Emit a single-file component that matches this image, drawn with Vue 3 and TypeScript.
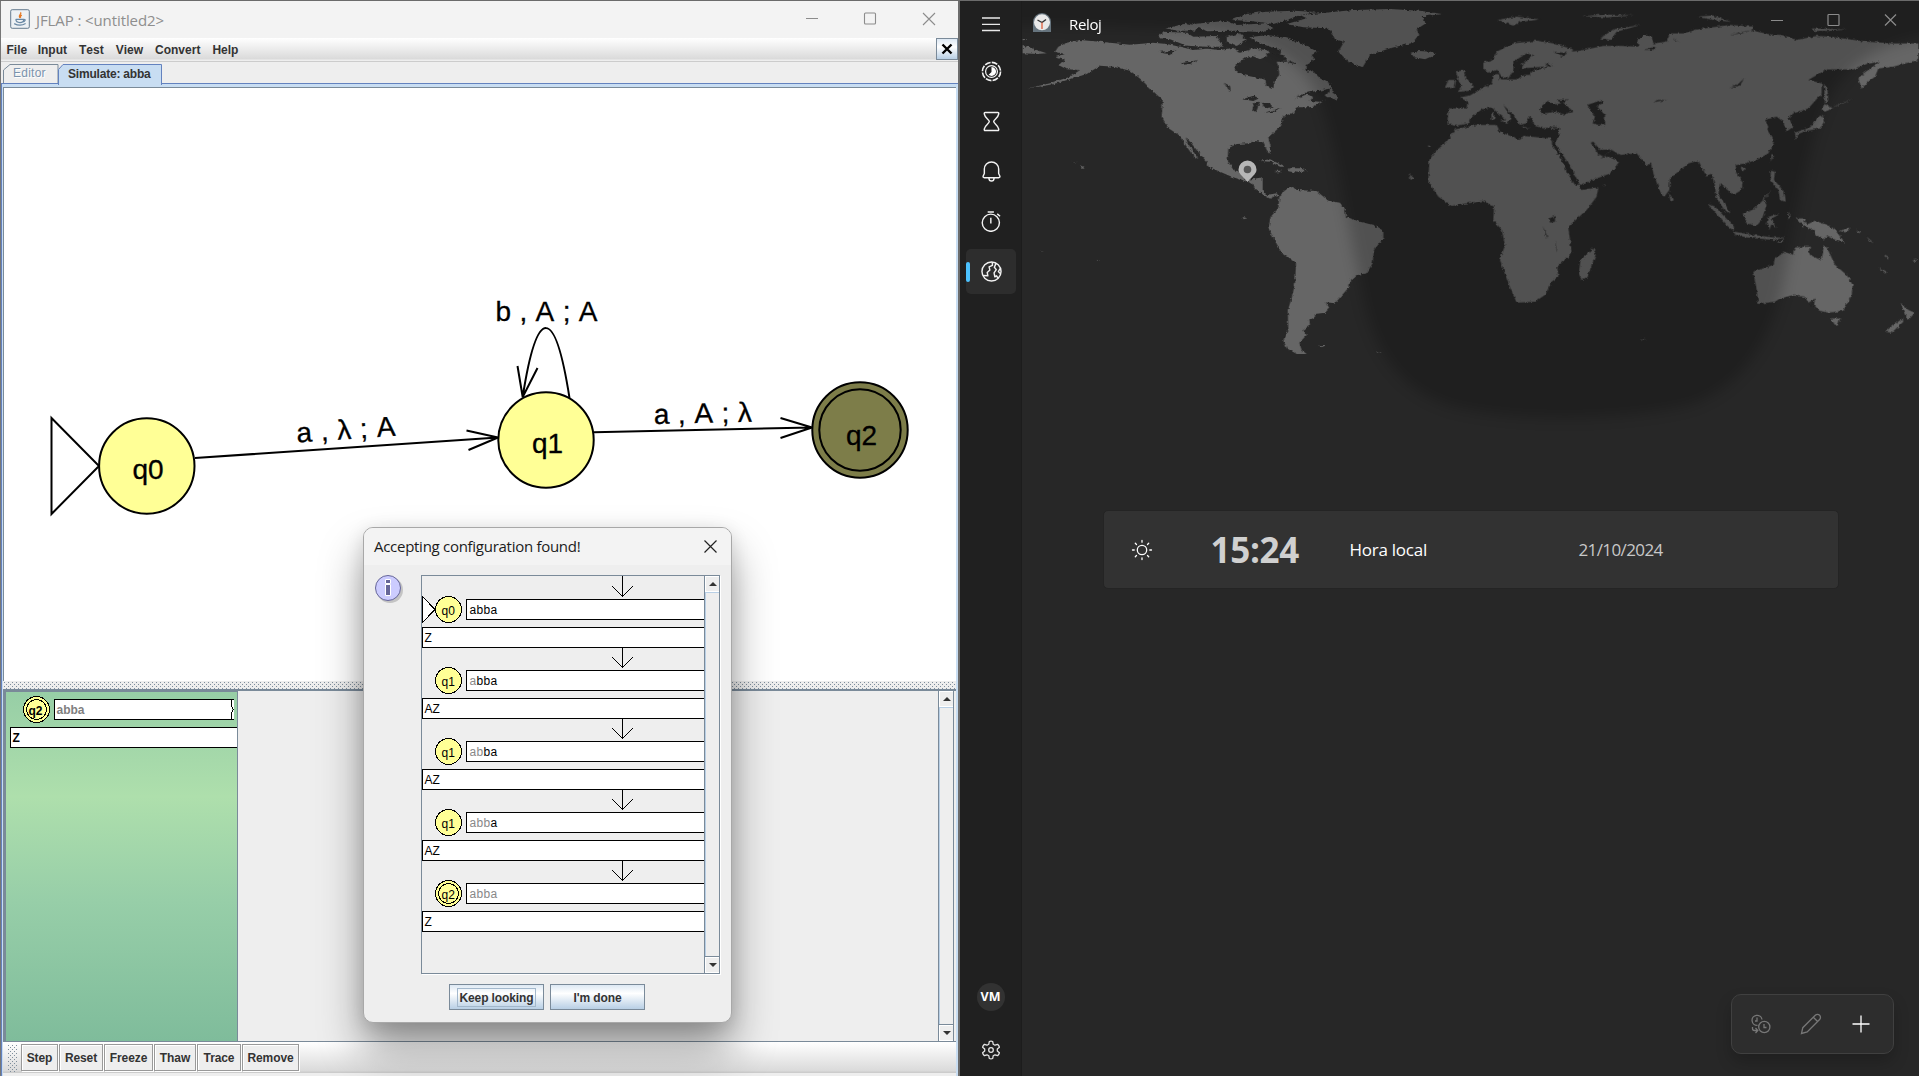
<script setup lang="ts">
interface Step {
  state: string
  read: string
  rest: string
  stack: string
  initial?: boolean
  final?: boolean
}

const menus: string[] = ['File', 'Input', 'Test', 'View', 'Convert', 'Help']
const steps: Step[] = [
  { state: 'q0', read: '', rest: 'abba', stack: 'Z', initial: true },
  { state: 'q1', read: 'a', rest: 'bba', stack: 'AZ' },
  { state: 'q1', read: 'ab', rest: 'ba', stack: 'AZ' },
  { state: 'q1', read: 'abb', rest: 'a', stack: 'AZ' },
  { state: 'q2', read: 'abba', rest: '', stack: 'Z', final: true },
]
const actions = [
  { label: 'Step', width: 37 },
  { label: 'Reset', width: 44 },
  { label: 'Freeze', width: 49 },
  { label: 'Thaw', width: 42 },
  { label: 'Trace', width: 44 },
  { label: 'Remove', width: 57 },
]

// Land outlines, western hemisphere
const west: string = [
  'M115 140 140 128 180 120 240 125 330 134 400 128 440 132 480 140 520 150 560 146 600 150 640 143 660 158 690 150 705 165 670 178 648 195 645 210 670 225 735 238 740 258 760 265 765 240 778 225 775 200 770 185 800 185 840 197 860 215 875 210 900 235 935 255 935 265 880 275 850 280 825 298 860 283 880 290 870 303 900 305 918 298 880 320 865 322 830 322 822 338 790 348 783 378 745 412 752 440 752 462 740 450 730 425 700 423 690 430 650 432 625 445 623 480 640 510 660 515 680 540 728 532 728 570 740 585 770 580 778 592 765 588 750 596 715 575 695 550 635 530 600 515 565 500 560 485 530 450 510 425 497 412 503 430 535 478 520 468 500 440 480 407 445 385 425 350 428 300 395 270 365 240 330 212 280 200 240 197 200 222 150 238 90 255 25 265 90 250 150 230 180 210 140 208 115 195 135 180 105 172 135 162 105 155Z',
  'M778 592 790 572 818 560 830 570 890 573 925 602 960 608 975 630 978 650 1020 665 1060 675 1090 692 1090 715 1062 750 1058 790 1040 820 1010 825 990 842 988 860 945 910 918 907 928 925 915 938 885 942 885 955 868 958 870 975 850 990 860 1005 838 1028 845 1050 860 1062 830 1062 800 1045 790 1020 805 990 803 930 815 895 825 850 828 790 785 760 745 685 752 650 775 625Z',
  'M800 72 860 55 840 45 900 40 1000 30 1110 27 1200 32 1265 42 1205 50 1218 70 1190 88 1198 105 1180 128 1110 145 1050 165 1028 202 985 185 955 155 972 125 945 118 935 98 920 85 850 82Z',
  'M688 112 740 105 800 115 845 130 892 155 875 165 885 178 868 190 850 212 825 190 780 165 785 150 750 140 720 130Z',
  'M415 108 430 95 500 98 520 110 590 108 610 140 560 140 500 137 450 118 420 115Z',
  'M440 85 500 70 540 78 520 92 470 92Z M520 72 620 62 650 75 740 70 760 85 720 96 640 92 560 94Z M635 60 680 42 740 35 820 32 890 36 840 45 800 60 760 72 700 64Z M620 110 660 100 680 120 650 138 622 128Z M690 145 740 150 750 165 720 178 690 165Z M790 170 830 182 805 186Z',
  'M8 135 50 150 80 160 50 162 8 160Z M8 117 28 118 8 121Z M920 280 935 262 938 278 958 292 950 302 935 292 918 292Z',
  'M720 482 750 478 795 500 780 500 750 485Z M808 505 840 505 860 512 830 518 805 514Z M768 512 782 512 782 517 768 517Z M895 1035 920 1035 905 1042Z M1070 1052 1085 1058 1072 1058Z M182 495 195 502 190 508Z M160 485 170 489 160 487Z M668 651 683 655 670 658Z M232 779 240 782 232 782Z M64 750 70 755 64 754Z',
  'M1172 158 1195 153 1235 155 1250 163 1215 178 1182 172Z M1225 435 1233 441 1225 441Z M1166 520 1182 535 1172 540Z',
].join(' ')

const westWater: string =
  'M668 298 700 287 718 295 700 303Z M697 330 703 307 720 305 708 337Z M725 308 750 310 758 322 740 325 730 318Z M733 338 785 322 760 335Z M612 248 630 258 632 275 620 262Z M483 190 535 180 510 192 490 194Z M420 155 470 152 450 163 430 160Z M735 160 790 165 800 180 760 180Z M820 292 880 275 930 270 915 290 880 290 860 282Z'

// Land outlines, eastern hemisphere
const east: string = [
  'M85 325 140 325 142 305 120 292 150 286 185 265 215 252 218 225 236 222 240 238 290 238 330 215 400 198 335 203 310 205 305 195 340 165 320 160 280 185 280 210 265 235 245 230 232 210 205 218 190 205 190 188 220 178 230 155 280 130 350 122 400 130 460 148 450 160 400 155 425 170 450 155 480 152 550 138 605 138 655 140 652 122 672 103 695 110 700 130 740 125 750 100 790 100 830 88 930 75 1000 80 998 92 1050 103 1085 105 1130 120 1190 108 1230 110 1340 125 1420 130 1495 130 1495 180 1420 200 1375 205 1365 230 1345 245 1325 266 1315 235 1330 220 1380 185 1340 192 1300 208 1220 208 1165 240 1205 250 1205 280 1165 325 1120 340 1105 355 1120 380 1100 394 1090 365 1070 350 1035 360 1045 380 1042 390 1062 425 1045 460 1010 480 975 490 945 497 945 512 968 545 965 570 940 585 900 550 895 585 920 620 932 640 915 633 890 595 885 560 875 520 860 530 835 482 805 490 750 535 748 570 733 590 720 575 700 520 693 490 680 497 650 460 600 465 575 450 550 470 540 475 565 470 598 485 570 520 480 555 470 540 430 470 405 430 415 410 418 383 400 380 370 385 345 378 330 348 318 370 300 375 280 345 250 315 262 335 275 355 265 365 240 345 215 322 185 328 150 355 145 370 105 378 82 370Z',
  'M80 425 105 388 170 375 230 375 240 395 300 420 310 408 390 415 405 440 430 480 470 540 485 570 535 562 530 590 500 630 445 680 455 760 412 800 415 830 395 845 375 885 345 905 290 908 265 850 240 780 255 735 245 690 220 660 222 620 190 603 130 612 95 618 55 590 25 545 28 480 45 455Z',
  'M482 780 520 745 527 765 500 835 485 840 476 820Z M747 580 762 600 752 606Z M540 115 580 88 662 75 590 95 572 120Z M232 60 290 50 360 58 300 66 280 77Z M485 48 560 44 640 46 560 52Z M832 50 880 46 930 65 880 60Z M1175 85 1280 88 1230 93 1180 93Z',
  'M75 262 85 240 105 240 102 262 85 266Z M108 215 130 210 140 235 162 260 150 272 112 276 125 262 115 240Z',
  'M212 250 240 238 240 246Z M214 340 222 335 224 358 215 360Z M240 362 268 360 262 372Z M305 380 330 384 310 386Z M392 385 408 382 398 390Z',
  'M1210 250 1222 265 1225 300 1215 310 1213 270Z M1213 312 1238 325 1215 335 1205 330Z M1208 345 1212 365 1200 385 1160 392 1128 405 1125 398 1170 382 1195 350Z M1125 400 1135 410 1128 418Z M1055 462 1062 465 1052 485Z M962 502 976 505 968 514Z',
  'M1052 512 1065 515 1062 540 1080 560 1090 575 1095 605 1080 600 1075 570 1052 540Z M1028 598 1058 565 1030 602Z M968 640 1000 628 1030 600 1040 615 1025 660 1010 678 980 670Z M862 610 885 620 942 680 940 692 915 672Z M942 695 1000 705 1060 712 1100 712 1060 720 980 712 945 704Z M1045 650 1080 642 1055 655 1070 685 1055 670 1048 690 1040 670Z M1070 728 1095 715 1085 728Z M1105 632 1112 650 1105 658Z',
  'M1130 655 1155 655 1150 668 1165 672 1185 662 1220 675 1245 690 1275 728 1250 722 1225 708 1210 718 1185 705 1180 690 1150 678Z M1258 693 1292 682 1280 697Z M1310 690 1325 700 1312 697Z M1340 710 1362 730 1348 722Z M1375 802 1400 817 1395 820Z M1398 762 1406 780 1398 772Z M1475 783 1490 778 1488 786Z',
  'M1000 815 1060 795 1065 775 1095 755 1118 765 1125 742 1170 740 1165 762 1205 782 1212 735 1222 745 1245 795 1280 825 1298 855 1295 885 1270 932 1225 938 1198 932 1182 915 1185 895 1165 908 1155 890 1115 886 1080 895 1065 905 1015 912 1010 870Z M1232 955 1260 955 1255 972 1245 975Z',
  'M1442 908 1465 930 1485 938 1465 960 1455 945Z M1448 955 1450 965 1415 998 1395 995 1430 968Z M665 1015 680 1020 665 1020Z M1238 322 1300 295 1260 315Z M548 555 560 557 550 558Z',
].join(' ')

const eastWater: string =
  'M360 330 365 318 385 302 400 315 430 308 460 335 430 343 405 335 365 342Z M410 300 445 298 425 310Z M502 315 545 300 548 310 530 318 555 345 555 375 535 375 518 370 525 350Z M512 428 520 425 540 450 575 448 550 470 535 462Z M388 655 405 648 405 665 390 668Z M368 678 384 715 376 705Z M406 722 412 755 408 745Z M928 264 955 252 972 235 960 256Z M700 308 712 300 742 300 712 304Z M928 105 1000 90 965 100Z M300 208 335 203 330 225 305 225Z M375 190 398 195 385 201Z M393 428 402 428 430 468 455 505 478 552 466 556 440 515 425 480Z M672 150 705 140 700 150Z M760 115 778 128 762 120Z M1172 918 1180 908 1182 918Z'
</script>

<template>
  <main class="desktop">
    <section class="jflap">
      <header class="titlebar">
        <svg class="java" width="20" height="20" viewBox="0 0 20 20">
          <rect x=".7" y=".7" width="18.6" height="18.6" rx="1.5" fill="#edf1f4" stroke="#657b8e" />
          <path d="M10.500 3.200c1.800 1.800-2.700 2.800-.8 5.600M11.800 6.200c-1.600.8-1.800 1.600-1 2.600" fill="none" stroke="#e67924" stroke-width="1.300" />
          <path d="M5.800 10.300h8c0 4.400-7.600 4.400-8 0M13.800 10.300c2.600-.2 1 2.600-.9 2.600M4.200 14.600c3.500 1.900 8.100 1.900 11.400 0" fill="none" stroke="#6988a4" stroke-width="1.200" />
        </svg>
        <span class="caption">JFLAP : &lt;untitled2&gt;</span>
        <svg class="controls" width="132" height="16" viewBox="0 0 132 16" fill="none" stroke="#8c8c8c" stroke-width="1.1">
          <path d="M1 7.500h12M118 2l12 12M130 2l-12 12" /><rect x="59.500" y="2" width="11" height="11" rx="1" />
        </svg>
      </header>
      <nav class="menubar">
        <span v-for="item in menus" :key="item">{{ item }}</span>
        <button class="close-tab"><svg width="12" height="12" viewBox="0 0 12 12"><path d="M1.500 1.500l9 9M10.500 1.500l-9 9" stroke="#000" stroke-width="2.400" /></svg></button>
      </nav>
      <div class="tabs">
        <svg width="162" height="23" viewBox="0 0 162 23" class="tabshape">
          <path d="M2.500 21V8L9 2.500H57V21" fill="#eee" stroke="#7a8a99" />
          <path d="M57.500 23V7.500L62 2.500H160.500V23" fill="#c8ddf2" stroke="#6382bf" />
        </svg>
        <span class="tab-off">Editor</span><span class="tab-on">Simulate: abba</span>
      </div>
      <div class="page">
        <div class="canvas">
          <svg width="951" height="593" viewBox="4 88 951 593" fill="none" stroke="#000" stroke-width="2">
            <path d="M51.500 418 99 466 51.500 514Z" />
            <path d="M195 458 498 437.500 466.500 430.500M498 437.500 468.500 450" />
            <path d="M594 432.300 812 427.500 780.500 418M812 427.500 780.500 438" />
            <path d="M569.500 398C555 305 537 305 522.700 397L517.500 366M522.700 397 537.500 368" />
            <circle cx="146.800" cy="466" r="47.700" fill="#ffff96" />
            <circle cx="546" cy="440" r="47.700" fill="#ffff96" />
            <circle cx="860" cy="430" r="47.700" fill="#7d7d49" />
            <circle cx="860" cy="430" r="40.700" />
            <g class="diagram-text">
              <text x="132.500" y="479">q0</text><text x="532" y="453">q1</text><text x="846" y="445">q2</text>
              <text x="495.500" y="320.500" textLength="102">b , A ; A</text>
              <text transform="translate(297 442.500) rotate(-3.900)" textLength="99">a , λ ; A</text>
              <text transform="translate(654 424) rotate(-1.300)" textLength="98">a , A ; λ</text>
            </g>
          </svg>
        </div>
        <div class="divider"></div>
        <div class="pane">
          <div class="config">
            <svg width="231" height="349" viewBox="6 692 231 349" shape-rendering="crispEdges">
              <circle cx="36.500" cy="709.500" r="13" fill="#ffff96" stroke="#000" />
              <circle cx="36.500" cy="709.500" r="10" fill="none" stroke="#000" />
              <path d="M233.500 699.500H54.500v20h179M231.500 699.500v7l2 3-2 3v7" fill="#fff" stroke="#000" />
              <rect x="10.500" y="727.500" width="230" height="20" fill="#fff" stroke="#000" />
              <g class="small-text bold">
                <text x="28.500" y="715">q2</text><text x="56.500" y="714" fill="#808080" textLength="28">abba</text><text x="12.500" y="742">Z</text>
              </g>
            </svg>
          </div>
          <div class="scrollbar"><i class="up"></i><b></b><i class="down"></i></div>
        </div>
        <div class="toolbar">
          <span class="grip"></span>
          <button v-for="a in actions" :key="a.label" :style="{ width: a.width + 'px' }">{{ a.label }}</button>
        </div>
      </div>
    </section>

    <section class="clock">
      <aside class="rail">
        <svg class="burger" width="20" height="16" viewBox="0 0 20 16" stroke="#e8e8e8" stroke-width="1.300"><path d="M1 2h18M1 8.300h18M1 14.500h18" /></svg>
        <div class="nav">
          <div class="item">
            <svg viewBox="0 0 22 22"><circle cx="11" cy="11" r="9.500" stroke-width="1.700" stroke-dasharray="6.200 1.260" /><circle cx="11" cy="11" r="6.200" stroke-width="1.300" /><path d="M11 6.300a4.700 4.700 0 1 1-3 8.200L11 11.500Z" fill="#fff" stroke="none" /></svg>
          </div>
          <div class="item">
            <svg viewBox="0 0 22 22"><path d="M4.500 1.500h13c1 0 1.300.8 1 1.800-.5 3.800-5.200 5.700-5.200 7.700s4.700 4 5.200 7.700c.3 1-.1 1.800-1 1.800h-13c-1 0-1.300-.8-1-1.800.5-3.700 5.200-5.700 5.200-7.700S4 7.100 3.500 3.300c-.3-1 .1-1.800 1-1.800Z" /></svg>
          </div>
          <div class="item">
            <svg viewBox="0 0 22 22"><path d="M3.500 17.500h15c1.200 0 1.600-.8 1.200-1.700l-1.200-2.700V8.500a7.500 7.500 0 0 0-15 0v4.600l-1.200 2.700c-.4.900 0 1.700 1.200 1.700ZM8.300 18c.2 4 5.200 4 5.400 0" /></svg>
          </div>
          <div class="item">
            <svg viewBox="0 0 22 22"><circle cx="10.300" cy="12.300" r="9" /><path d="M10.300 7v6M7 1h6.500M17 3l3 2.500" /></svg>
          </div>
          <div class="item selected">
            <svg viewBox="0 0 22 22"><circle cx="11" cy="11" r="10" /><path d="M11.800 1.300 12 4.500 8.500 6.200 9.300 9.500 6.500 12 7.200 15.500 2 15.200M15.700 2.500 14 6.500 16 9 13.700 12.500 14.500 16.500 16.300 15.500 17.800 18M20 8 18.200 11 20.500 13.500" /></svg>
          </div>
        </div>
        <div class="rail-foot">
          <span class="avatar">VM</span>
          <svg width="20" height="20" viewBox="0 0 20 20" fill="none" stroke="#e4e4e4" stroke-width="1.300"><path d="M8.300 1.500Q10 .9 11.700 1.500L12.200 4.200 14 5.200 16.600 4.300Q18 5.600 18.400 7.200L16.300 9V11L18.400 12.800Q18 14.400 16.600 15.700L14 14.800 12.200 15.800 11.700 18.500Q10 19.100 8.300 18.500L7.800 15.800 6 14.800 3.400 15.700Q2 14.400 1.600 12.800L3.700 11V9L1.600 7.200Q2 5.600 3.400 4.300L6 5.200 7.800 4.200Z" stroke-linejoin="round" /><circle cx="10" cy="10" r="2.300" /></svg>
        </div>
      </aside>

      <div class="world">
        <div class="map">
          <svg width="897" height="440" viewBox="1022 1 897 440">
            <defs>
              <filter id="coast" x="0" y="0" width="100%" height="100%"><feTurbulence type="fractalNoise" baseFrequency=".1" numOctaves="3" seed="4" result="n" /><feDisplacementMap in="SourceGraphic" in2="n" scale="11" xChannelSelector="R" yChannelSelector="G" /><feGaussianBlur stdDeviation="1" /></filter>
              <filter id="dusk" x="-10%" y="-10%" width="120%" height="120%"><feGaussianBlur stdDeviation="7" /></filter>
            </defs>
            <g filter="url(#coast)" transform="translate(1020 0) scale(.33333)">
              <path :d="west" fill="#666" /><path :d="westWater" fill="#272727" />
              <g transform="translate(1200 0)"><path :d="east" fill="#666" /><path :d="eastWater" fill="#272727" /></g>
            </g>
            <path filter="url(#dusk)" fill="#000" opacity=".2" d="M980-40H1960V32C1890 36 1846 60 1826 105C1806 150 1796 220 1782 290C1768 345 1740 388 1690 405C1620 422 1510 422 1450 406C1395 388 1370 345 1360 280C1346 220 1338 150 1320 100C1304 62 1270 40 1210 30L980 24Z" />
            <path d="M1247.500 182c-6-7-9-8.500-9-12.500a9 9 0 0 1 18 0c0 4-3 5.500-9 12.500Z" fill="#b6b6b6" />
            <circle cx="1247.500" cy="169.500" r="3.800" fill="#555" />
          </svg>
          <header class="clock-title">
            <svg width="20" height="20" viewBox="0 0 20 20"><path d="M1 19V9a9 9 0 0 1 18 0v10Z" fill="#66747e" /><circle cx="10" cy="9.300" r="8" fill="#e9e9e9" /><path d="M10 9.500 5.500 7M10 9.500l4-3" stroke="#333" stroke-width="1.400" /><path d="M10 9.500V16" stroke="#e0522e" stroke-width="1.200" /></svg>
            <span>Reloj</span>
            <svg class="win" width="128" height="14" viewBox="0 0 128 14" fill="none" stroke="#8b8b8b" stroke-width="1.200"><path d="M1 7.500h12M115 1.500l11 11M126 1.500l-11 11" /><rect x="58" y="1.500" width="11" height="11" rx=".8" /></svg>
          </header>
        </div>
        <div class="local">
          <svg width="22" height="22" viewBox="0 0 22 22" fill="none" stroke="#fff" stroke-width="1.300" stroke-linecap="round"><circle cx="11" cy="11" r="4.700" /><path d="M11 1.500v1.700M11 18.800v1.700M1.500 11h1.700M18.800 11h1.700M4.300 4.300l1.200 1.200M16.500 16.500l1.200 1.200M4.300 17.700l1.200-1.200M16.500 5.500l1.200-1.200" /></svg>
          <strong>15:24</strong>
          <span class="place">Hora local</span>
          <span class="date">21/10/2024</span>
        </div>
        <div class="commands">
          <svg width="20" height="20" viewBox="0 0 20 20" fill="none" stroke="#777" stroke-width="1.300"><path d="M6.500 11.300A5 5 0 1 1 11 5.500M6 3.500V7H4M1.500 13v1.500a2 2 0 0 0 2 2H6M4.500 14l2.300 2.500L4.500 19" /><circle cx="13.300" cy="13" r="5.600" /><path d="M13 10v3.500h2.500" /></svg>
          <svg width="22" height="22" viewBox="0 0 22 22" fill="none" stroke="#777" stroke-width="1.300"><path d="M1.500 20.500l1.300-5.800L15.300 2.200a3 3 0 0 1 4.300 4.300L7.200 19ZM13.300 4.200l4.300 4.300" /></svg>
          <svg width="18" height="18" viewBox="0 0 18 18" stroke="#fff" stroke-width="1.300"><path d="M.5 9h17M9 .5v17" /></svg>
        </div>
      </div>
    </section>

    <div class="dialog">
      <header>
        <span>Accepting configuration found!</span>
        <svg width="13" height="13" viewBox="0 0 13 13"><path d="M.5.5l12 12M12.500.5l-12 12" stroke="#222" stroke-width="1.200" /></svg>
      </header>
      <div class="dialog-main">
        <svg class="info" width="30" height="32" viewBox="0 0 30 32">
          <circle cx="16" cy="16" r="13" fill="#999" opacity=".5" /><circle cx="14" cy="14" r="12.500" fill="#ccccff" stroke="#666699" />
          <path d="M11.500 5.500h5v4h-5zM11.500 10.500h5v11h-5z" fill="#666699" stroke="#fff" />
        </svg>
        <div class="trace">
          <div class="steps">
            <svg v-for="(s, i) in steps" :key="i" width="282" height="71" viewBox="0 0 282 71" shape-rendering="crispEdges">
              <path d="M200.500 0v20M190 10l10.500 10.500L211 10" fill="none" stroke="#000" />
              <path v-if="s.initial" d="M.5 20.500 13 33.500.5 46.500Z" fill="#fff" stroke="#000" />
              <circle cx="26.500" cy="33.500" r="13" fill="#ffff96" stroke="#000" />
              <circle v-if="s.final" cx="26.500" cy="33.500" r="10" fill="none" stroke="#000" />
              <rect x="44.500" y="23.500" width="245" height="20" fill="#fff" stroke="#000" />
              <rect x=".5" y="51.500" width="290" height="20" fill="#fff" stroke="#000" />
              <g class="small-text">
                <text x="19.500" y="38.500">{{ s.state }}</text>
                <text x="47.500" y="38" letter-spacing=".3"><tspan fill="#888">{{ s.read }}</tspan><tspan>{{ s.rest }}</tspan></text>
                <text x="2.500" y="66">{{ s.stack }}</text>
              </g>
            </svg>
          </div>
          <div class="scrollbar"><i class="up"></i><b></b><i class="down"></i></div>
        </div>
      </div>
      <footer><button><span class="focus">Keep looking</span></button><button>I'm done</button></footer>
    </div>
  </main>
</template>

<style>
body { margin: 0; overflow: hidden; background: #202020; }
</style>

<style scoped>
* { box-sizing: border-box; }
.desktop { position: relative; display: flex; width: 1919px; height: 1076px; overflow: hidden; border-top: 1px solid #6b6b6b; font-family: "Liberation Sans", sans-serif; }
button { padding: 0; margin: 0; font: bold 12px "Liberation Sans", sans-serif; letter-spacing: -.1px; color: #333; white-space: nowrap; }

.jflap { display: flex; flex-direction: column; width: 960px; height: 1075px; flex: none; border-left: 1px solid #777; border-right: 2px solid #6c6c6c; background: #eee; overflow: hidden; }
.titlebar { display: flex; align-items: center; height: 37px; flex: none; padding: 0 21px 0 9px; background: #f3f3f3; }
.java { margin-top: -2px; }
.caption { margin: 0 0 0 6px; font: 15px "Open Sans", sans-serif; letter-spacing: -.1px; color: #8e8e8e; }
.controls { margin-left: auto; margin-top: -1px; }
.menubar { display: flex; align-items: center; height: 24px; flex: none; gap: 12px; padding-left: 5.500px; border-bottom: 1px solid #ccc; background: linear-gradient(#fff, #dadada 21px, #eee 22px); font: bold 12px "Liberation Sans", sans-serif; font-kerning: none; color: #333; }
.menubar span:nth-child(2) { margin-left: -1.500px; }
.close-tab { display: grid; place-items: center; width: 22px; height: 22px; margin: 0 0 1px auto; border: 1px solid #7a8a99; background: linear-gradient(#dde8f3, #fff 40%, #b8cfe5); }
.tabs { position: relative; display: flex; height: 21px; flex: none; font-size: 12px; }
.tabshape { position: absolute; left: 0; top: 0; z-index: 1; }
.tab-off, .tab-on { position: relative; z-index: 2; line-height: 22px; }
.tab-off { margin-left: 12px; width: 55px; color: #7a93ad; letter-spacing: .25px; text-shadow: 1px 1px #fff; }
.tab-on { font-weight: bold; letter-spacing: -.2px; color: #333; line-height: 24px; }
.page { display: flex; flex-direction: column; flex: 1; padding: 3px 2px 0 1px; border-top: 1px solid #6382bf; border-left: 1px solid #6382bf; background: #c8ddf2; }
.canvas { height: 594px; flex: none; border-top: 1px solid #7a8a99; border-left: 1px solid #7a8a99; background: #fff; overflow: hidden; }
.canvas svg { display: block; }
.diagram-text { font: 28px "Liberation Sans", sans-serif; font-kerning: none; fill: #000; stroke: #000; stroke-width: .3; }
.divider { height: 8px; flex: none; background: radial-gradient(circle at 1.500px 1.500px, #7f8e9c .6px, transparent .8px) 0 0 / 4px 4px, radial-gradient(circle at 3.500px 3.500px, #7f8e9c .6px, transparent .8px) 0 0 / 4px 4px, #eee; }
.pane { display: flex; height: 353px; flex: none; border: solid #7a8a99; border-width: 2px 0 1px 3px; background: #eee; }
.config { width: 232px; border-right: 1px solid #7a8a99; border-top: 1px solid #7a8a99; background: linear-gradient(#97cea6, #aedfac 30%, #97cea8 60%, #7fbc9b); }
.config svg { display: block; }
.small-text { font: 12px "Liberation Sans", sans-serif; fill: #000; }
.small-text text[fill] { fill: #808080; }
.bold { font-weight: bold; }
.scrollbar { display: flex; flex-direction: column; width: 16px; margin-left: auto; border: solid #7a8a99; border-width: 0 1px; background: #eee; }
.scrollbar b { flex: 1; border-left: 1px solid #b8cfe5; border-top: 1px solid #b8cfe5; }
.scrollbar i { display: grid; place-items: center; height: 16px; border: 1px solid #fff; border-right: 0; box-shadow: 0 1px #7a8a99; }
.scrollbar i.down { box-shadow: 0 -1px #7a8a99; }
.scrollbar i::after { content: ""; border: 4px solid transparent; }
.scrollbar i.up::after { border-top: 0; border-bottom-color: #333; }
.scrollbar i.down::after { border-bottom: 0; border-top-color: #333; }
.pane .scrollbar { margin-right: 2px; }
.toolbar { display: flex; align-items: flex-start; gap: 1px; flex: 1; padding: 2px 0 0 4px; background: linear-gradient(#fff, #dadada 29px, #ccc 30px, #ccc 31px, #eee 31px); }
.grip { width: 10px; height: 28px; margin-right: 3px; background: radial-gradient(circle at 1.500px 1.500px, #7f8e9c .6px, transparent .8px) 0 0 / 4px 4px, radial-gradient(circle at 3.500px 3.500px, #7f8e9c .6px, transparent .8px) 0 0 / 4px 4px; }
.toolbar button { height: 27px; padding-top: 1px; border: 1px solid #999; box-shadow: inset 1px 1px #fff, 1px 1px #fff; background: #eee; }

.clock { display: flex; width: 959px; height: 1075px; color: #fff; font-family: "Open Sans", sans-serif; background: #202020; }
.rail { display: flex; flex-direction: column; align-items: center; width: 61px; flex: none; background: #202020; }
.burger { margin-top: 15px; }
.nav { display: flex; flex-direction: column; gap: 5px; margin-top: 17px; }
.item { display: grid; place-items: center; width: 50px; height: 45px; padding-left: 1px; border-radius: 5px; }
.item svg { width: 21px; height: 21px; fill: none; stroke: #f2f2f2; stroke-width: 1.5; stroke-linejoin: round; }
.item.selected { position: relative; background: #2d2d2d; }
.item.selected::before { content: ""; position: absolute; left: 0; top: 13px; width: 4px; height: 20px; border-radius: 2px; background: #4cc2ff; }
.rail-foot { display: flex; flex-direction: column; align-items: center; gap: 29px; margin-top: auto; padding-bottom: 16px; }
.avatar { width: 28px; height: 28px; border-radius: 50%; background: #323232; font: bold 12.500px/28px "Open Sans", sans-serif; text-align: center; }
.world { display: flex; flex-direction: column; align-items: center; flex: 1; border-left: 1px solid #1c1c1c; background: #272727; }
.map { position: relative; height: 509px; width: 897px; flex: none; }
.clock-title { position: absolute; left: 10px; right: 21px; top: 11px; display: flex; align-items: center; font: 15px "Open Sans", sans-serif; letter-spacing: -.35px; }
.clock-title span { margin: 2px 0 0 17px; }
.win { margin: 1px 0 0 auto; align-self: flex-start; }
.local { display: flex; align-items: center; width: 736px; height: 79px; padding-left: 27px; border: 1px solid #242424; border-radius: 5px; background: #323232; font-size: 17px; letter-spacing: -.25px; flex: none; }
.local strong { width: 139px; margin-left: 58px; font-size: 35px; letter-spacing: -.3px; color: #d0d0d0; }
.place { width: 229px; }
.date { color: #c8c8c8; letter-spacing: -.6px; }
.commands { display: flex; align-items: center; gap: 28px; width: 163px; height: 60px; margin: auto 25px 22px auto; padding-left: 19px; border: 1px solid #404040; border-radius: 10px; background: #2d2d2d; box-shadow: 0 8px 16px #0003; }
.commands svg:nth-child(2) { margin-left: 1px; }
.commands svg:last-child { margin-left: 2px; }

.dialog { position: absolute; left: 363px; top: 526px; width: 369px; height: 496px; border: 1px solid #a8a8a8; border-radius: 10px; background: #eee; box-shadow: 0 26px 44px rgba(0, 0, 0, .38), 0 4px 18px rgba(0, 0, 0, .12); overflow: visible; }
.dialog header { display: flex; align-items: center; justify-content: space-between; height: 37px; padding: 0 14px 1px 10px; border-radius: 9px 9px 0 0; background: #f3f3f3; font: 15px "Open Sans", sans-serif; letter-spacing: -.28px; color: #1b1b1b; }
.dialog-main { display: flex; padding: 10px 0 0 10px; }
.info { margin: -1px 17px 0 0; }
.trace { display: flex; width: 299px; height: 399px; border: 1px solid #7a8a99; box-shadow: 1px 1px #fff; }
.steps { width: 282px; overflow: hidden; }
.steps svg { display: block; overflow: visible; }
.trace .scrollbar { width: 15px; border-right: 0; }
.dialog footer { display: flex; gap: 6px; margin: 10px 0 0 85px; }
.dialog footer button { width: 95px; height: 26px; padding-top: 1px; border: 1px solid #7a8a99; background: linear-gradient(#dde8f3, #fff 35%, #b8cfe5); }
.focus { display: inline-block; padding: 2px 1px 0; border: 1px solid #a3b8cc; line-height: 15px; }
</style>
